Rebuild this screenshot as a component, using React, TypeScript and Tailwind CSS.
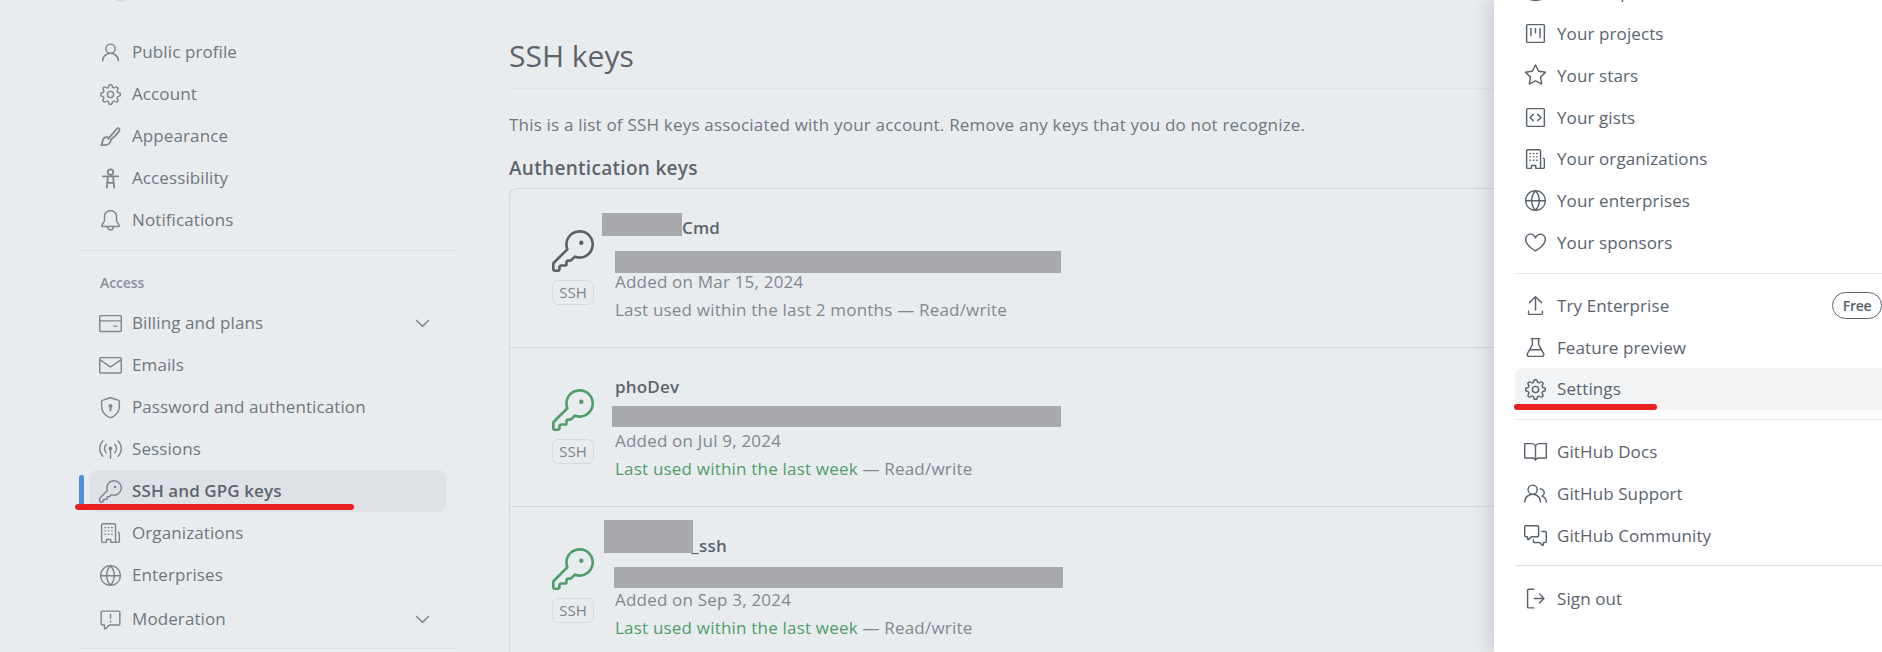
import React from 'react';
import {
  GoPerson, GoGear, GoBell, GoCreditCard, GoMail, GoShieldLock,
  GoBroadcast, GoKey, GoOrganization, GoGlobe, GoReport, GoChevronDown, GoProject, GoStar,
  GoCodeSquare, GoHeart, GoUpload, GoBeaker, GoBook, GoPeople, GoCommentDiscussion, GoSignOut, GoCopilot,
} from 'react-icons/go';

type Icon = React.ComponentType<{ className?: string }>;

const font = { fontFamily: '"Open Sans", "Noto Sans", sans-serif' };

// octicons the package lacks
const PaintbrushIcon: Icon = ({ className }) => (
  <svg viewBox="0 0 18 18" fill="none" stroke="currentColor" strokeWidth="1.4" strokeLinejoin="round" strokeLinecap="round" className={className}>
    <path d="M7.200 10.900 14 2.900c.7-.8 2.300-.7 2.100.8-.2 1-1 2.200-3.300 4.600-1.400 1.400-2.700 2.600-3.500 3.200" />
    <path d="M7 9.600c-2.200-.2-4 1-4.200 3.200-.1 1-.4 2.200-1 3h2.700c2.700 0 4.600-1.800 4.800-4.200" />
  </svg>
);

const AccessibilityIcon: Icon = ({ className }) => (
  <svg viewBox="0 0 18 18" fill="none" stroke="currentColor" strokeWidth="1.4" strokeLinecap="round" strokeLinejoin="round" className={className}>
    <circle cx="9" cy="4" r="2.200" />
    <path d="M3 7.300h12" />
    <path d="M7 7.500 6.100 16.200M11 7.500l.9 8.700M6.700 12.500h4.600" />
  </svg>
);

// Sidebar row
const NavItem = ({ icon: Icon, label, chevron, active }: { icon: Icon; label: string; chevron?: boolean; active?: boolean }) => (
  <div className={`relative ml-[11px] mr-[11px] h-[42px] flex items-center pl-[9px] pr-[12px] rounded-lg ${active ? 'bg-[#dee2e6] font-semibold text-[#5c646c]' : 'text-[#6f7780]'}`}>
    {active && <span className="absolute -left-[11px] top-[5px] h-[30px] w-[5px] rounded bg-[#4a8fdd]" />}
    <Icon className="w-[23px] h-[23px] text-[#7d858d] shrink-0" />
    <span className="ml-[10px] text-[17px] tracking-[0.1px]">{label}</span>
    {chevron && <GoChevronDown className="ml-auto w-[23px] h-[23px] text-[#7d858d]" />}
  </div>
);

const MenuItem = ({ icon: Icon, label, badge, active }: { icon: Icon; label: string; badge?: boolean; active?: boolean }) => (
  <div className={`relative h-[41.8px] flex items-center pl-[9px] rounded-l-lg ${active ? 'bg-[#f1f3f5]' : ''}`}>
    <Icon className="w-[23px] h-[23px] text-[#59636e] shrink-0" />
    <span className="ml-[10px] text-[17px] tracking-[0.1px] text-[#59636e]">{label}</span>
    {badge && (
      <span className="ml-auto w-[50px] h-[27px] flex items-center justify-center border border-[#59636e] rounded-full text-[14px] font-semibold text-[#59636e] tracking-[-0.3px]">Free</span>
    )}
  </div>
);

const Divider = ({ className }: { className: string }) => <div className={`h-px ${className}`} />;

const Redact = ({ className }: { className: string }) => <div className={`absolute bg-[#a7a9ad] ${className}`} />;

const KeyRow = ({ name, added, used, green, last, children }: { name: string; added: string; used: string; green?: boolean; last?: boolean; children?: React.ReactNode }) => (
  <div className={`relative h-[159px] flex pl-[42px] ${last ? '' : 'border-b border-[#d3d8dd]'}`}>
    <div className="w-[42px] mt-[41px] flex flex-col items-center shrink-0">
      <GoKey className={`w-[42px] h-[42px] ${green ? 'text-[#4f9d69]' : 'text-[#5a6168]'}`} />
      <span className="mt-[8px] w-[42px] h-[25px] flex items-center justify-center border border-[#d5dade] rounded-md text-[15px] text-[#7d858d]">SSH</span>
    </div>
    <div className="ml-[21px] pt-[26px] text-[17px] tracking-[0.2px] text-[#808890]">
      <div className="h-[26px] font-semibold text-[#5c646c] leading-[26px]">{name}</div>
      <div className="h-[26px]" />
      <div className="h-[30px] leading-[30px]">{added}</div>
      <div className="h-[26px] leading-[26px]">
        {green ? <span className="text-[#4f9d69]">{used}</span> : used}
        {' — Read/write'}
      </div>
    </div>
    {children}
  </div>
);

const App: React.FC = () => {
  return (
    <div className="w-[1882px] h-[652px] overflow-hidden flex bg-[#e9ecef]" style={font}>
      {/* Sidebar */}
      <div className="w-[378px] ml-[79px] shrink-0 relative pt-[31px]">
        <span className="absolute left-[33px] -top-[18px] w-[18px] h-[20px] rounded-full bg-[#d4d8dc]" />
        <NavItem icon={GoPerson} label="Public profile" />
        <NavItem icon={GoGear} label="Account" />
        <NavItem icon={PaintbrushIcon} label="Appearance" />
        <NavItem icon={AccessibilityIcon} label="Accessibility" />
        <NavItem icon={GoBell} label="Notifications" />
        <Divider className="mt-[9px] bg-[#dadee2]" />
        <div className="mt-[21px] ml-[21px] h-[20px] flex items-center text-[14px] font-semibold text-[#8a9199] tracking-[-0.1px]">Access</div>
        <div className="mt-[10px]">
          <NavItem icon={GoCreditCard} label="Billing and plans" chevron />
          <NavItem icon={GoMail} label="Emails" />
          <NavItem icon={GoShieldLock} label="Password and authentication" />
          <NavItem icon={GoBroadcast} label="Sessions" />
          <NavItem icon={GoKey} label="SSH and GPG keys" active />
          <NavItem icon={GoOrganization} label="Organizations" />
          <NavItem icon={GoGlobe} label="Enterprises" />
          <div className="mt-[2px]">
            <NavItem icon={GoReport} label="Moderation" chevron />
          </div>
        </div>
        <Divider className="mt-[8px] bg-[#dadee2]" />
        {/* red annotation */}
        <span className="absolute -left-[4px] top-[504px] w-[279px] h-[6px] rounded-full bg-[#e8201f]" />
      </div>

      {/* Main */}
      <div className="flex-1 ml-[52px] min-w-0 pt-[36px]">
        <h1 className="text-[30px] leading-[40px] text-[#5c646c]">SSH keys</h1>
        <Divider className="mt-[12px] bg-[#dfe3e6]" />
        <p className="mt-[24px] h-[24px] leading-[24px] text-[17px] tracking-[0.2px] text-[#6f7780] whitespace-nowrap">
          This is a list of SSH keys associated with your account. Remove any keys that you do not recognize.
        </p>
        <h2 className="mt-[19px] h-[24px] leading-[24px] text-[19px] font-semibold tracking-[0.3px] text-[#5c646c]">Authentication keys</h2>
        <div className="mt-[8px] border border-[#d3d8dd] border-r-0 rounded-l-lg">
          <KeyRow name="xxxxxxxCmd" added="Added on Mar 15, 2024" used="Last used within the last 2 months">
            <Redact className="left-[92px] top-[24px] w-[80px] h-[23px]" />
            <Redact className="left-[105px] top-[62px] w-[446px] h-[22px]" />
          </KeyRow>
          <KeyRow name="phoDev" added="Added on Jul 9, 2024" used="Last used within the last week" green>
            <Redact className="left-[102px] top-[58px] w-[449px] h-[21px]" />
          </KeyRow>
          <KeyRow name="xxxxxxxx_ssh" added="Added on Sep 3, 2024" used="Last used within the last week" green last>
            <Redact className="left-[94px] top-[13px] w-[89px] h-[33px]" />
            <Redact className="left-[104px] top-[60px] w-[449px] h-[21px]" />
          </KeyRow>
        </div>
      </div>

      {/* Account menu */}
      <div className="w-[388px] shrink-0 bg-white shadow-[-8px_0_14px_rgba(160,170,180,0.35)] pl-[21px] relative">
        <div className="-mt-[29px]">
          <MenuItem icon={GoCopilot} label="Your Copilot" />
        </div>
        <MenuItem icon={GoProject} label="Your projects" />
        <MenuItem icon={GoStar} label="Your stars" />
        <MenuItem icon={GoCodeSquare} label="Your gists" />
        <MenuItem icon={GoOrganization} label="Your organizations" />
        <MenuItem icon={GoGlobe} label="Your enterprises" />
        <MenuItem icon={GoHeart} label="Your sponsors" />
        <Divider className="mt-[9px] mb-[11px] bg-[#e4e7ea]" />
        <MenuItem icon={GoUpload} label="Try Enterprise" badge />
        <MenuItem icon={GoBeaker} label="Feature preview" />
        <MenuItem icon={GoGear} label="Settings" active />
        <Divider className="mt-[9px] mb-[11px] bg-[#e4e7ea]" />
        <MenuItem icon={GoBook} label="GitHub Docs" />
        <MenuItem icon={GoPeople} label="GitHub Support" />
        <MenuItem icon={GoCommentDiscussion} label="GitHub Community" />
        <Divider className="mt-[9px] mb-[11px] bg-[#dfe3e6]" />
        <MenuItem icon={GoSignOut} label="Sign out" />
        {/* red annotation */}
        <span className="absolute left-[20px] top-[404px] w-[143px] h-[6px] rounded-full bg-[#e8201f]" />
      </div>
    </div>
  );
};

export default App;
